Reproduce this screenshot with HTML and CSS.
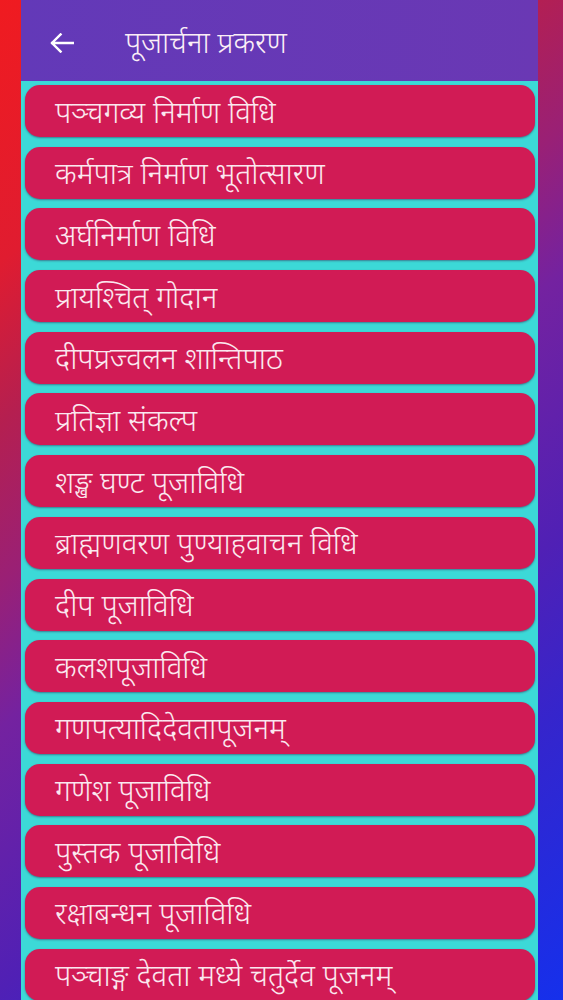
FILE: index.html
```html
<!DOCTYPE html>
<html lang="sa">
<head>
<meta charset="utf-8">
<title>पूजार्चना प्रकरण</title>
<link rel="stylesheet" href="styles.css">
</head>
<body>
<div class="frame">
  <header class="appbar">
    <svg class="back" viewBox="0 0 24 20" width="24" height="20" aria-hidden="true">
      <path d="M23 10H2.2M10.6 1.4L2 10l8.6 8.6" fill="none" stroke="#ffffff" stroke-width="2.4" stroke-linecap="square" stroke-linejoin="miter"/>
    </svg>
    <h1 class="title">पूजार्चना प्रकरण</h1>
  </header>
  <main class="list">
    <div class="item">पञ्चगव्य निर्माण विधि</div>
    <div class="item">कर्मपात्र निर्माण भूतोत्सारण</div>
    <div class="item">अर्घनिर्माण विधि</div>
    <div class="item">प्रायश्चित् गोदान</div>
    <div class="item">दीपप्रज्वलन शान्तिपाठ</div>
    <div class="item">प्रतिज्ञा संकल्प</div>
    <div class="item">शङ्ख घण्ट पूजाविधि</div>
    <div class="item">ब्राह्मणवरण पुण्याहवाचन विधि</div>
    <div class="item">दीप पूजाविधि</div>
    <div class="item">कलशपूजाविधि</div>
    <div class="item">गणपत्यादिदेवतापूजनम्</div>
    <div class="item">गणेश पूजाविधि</div>
    <div class="item">पुस्तक पूजाविधि</div>
    <div class="item">रक्षाबन्धन पूजाविधि</div>
    <div class="item">पञ्चाङ्ग देवता मध्ये चतुर्देव पूजनम्</div>
  </main>
</div>
</body>
</html>
```
FILE: styles.css
```css
html, body {
  margin: 0;
  padding: 0;
  height: 1000px;
  overflow: hidden;
}
body {
  background: linear-gradient(141deg, #f01b20 0%, #e01c30 18%, #b51f50 29%, #9a2075 40%, #7422a0 50%, #5020b5 68%, #3525cc 80%, #1530ec 100%);
  font-family: "Noto Sans", "Noto Sans Devanagari", "Lohit Devanagari", sans-serif;
}
.frame {
  margin-left: 21px;
  width: 517px;
  height: 1000px;
  display: flex;
  flex-direction: column;
  overflow: hidden;
}
.appbar {
  flex: 0 0 81px;
  background: linear-gradient(90deg, #6339b8, #6a38b4);
  display: flex;
  align-items: center;
  padding-left: 29px;
  box-sizing: border-box;
}
.back {
  flex: 0 0 auto;
  margin-top: 5px;
}
.title {
  margin: 0 0 0 51px;
  font-size: 29.6px;
  font-weight: 350;
  color: #fbeef6;
  line-height: 1;
  margin-top: 2px;
}
.list {
  flex: 1 1 auto;
  background: #3cd9d7;
  padding: 4px 3px 0 4px;
  display: flex;
  flex-direction: column;
  gap: 9.7px;
}
.item {
  flex: 0 0 52px;
  height: 52px;
  box-sizing: border-box;
  background: #d11b55;
  border-radius: 15px;
  box-shadow: 0 1px 2px rgba(60, 10, 60, 0.45);
  display: flex;
  align-items: center;
  padding-left: 30px;
  font-size: 29.8px;
  font-weight: 350;
  color: #fbe8ef;
  white-space: nowrap;
}
```
